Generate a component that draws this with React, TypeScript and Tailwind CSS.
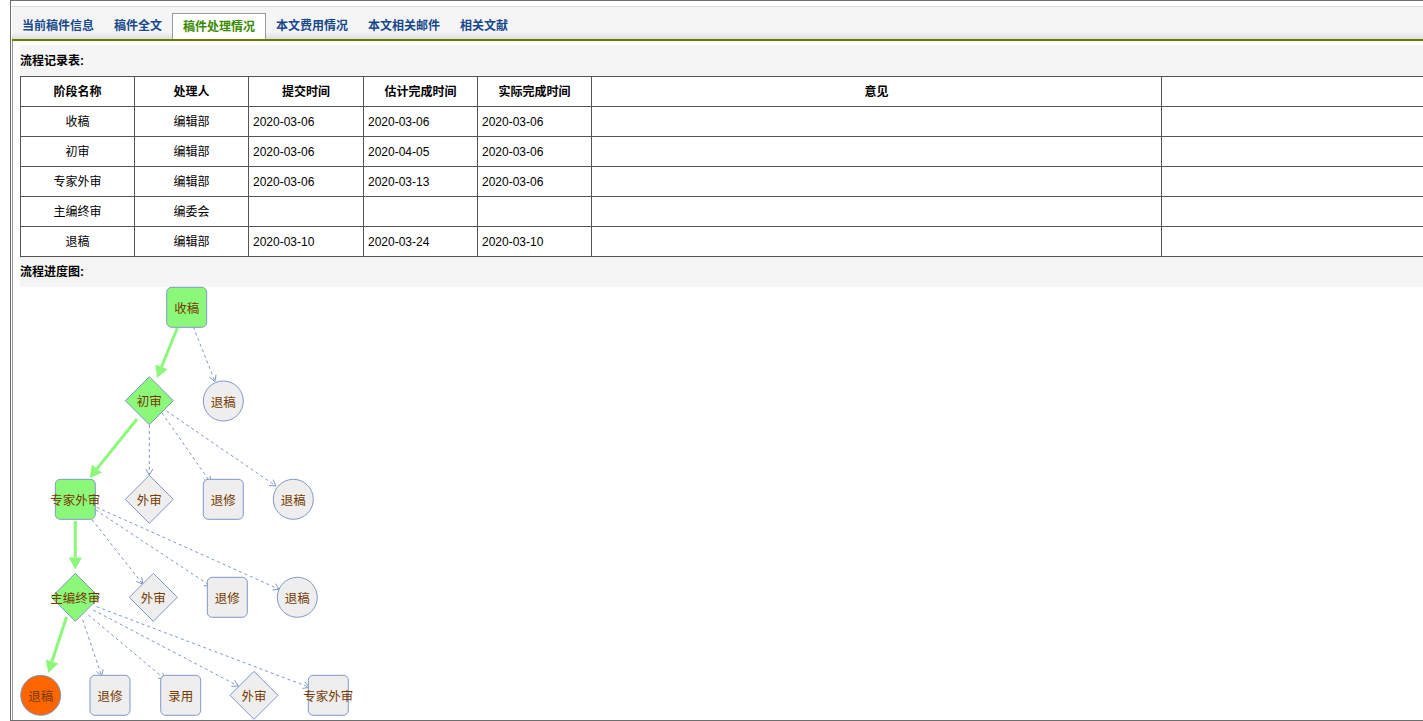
import React from 'react';

type P = [number, number];

interface FlowNode {
  kind: 'rect' | 'diamond' | 'circle';
  x: number;
  y: number;
  label: string;
  fill: string;
}

const GREEN = '#8cf87a';
const GRAY = '#eeeeee';
const ORANGE = '#ff6600';
const BLUE = '#7f98c9';
const TEXT = '#763a00';

const tabs = ['当前稿件信息', '稿件全文', '稿件处理情况', '本文费用情况', '本文相关邮件', '相关文献'];

const rows = [
  { stage: '收稿', who: '编辑部', submit: '2020-03-06', plan: '2020-03-06', done: '2020-03-06' },
  { stage: '初审', who: '编辑部', submit: '2020-03-06', plan: '2020-04-05', done: '2020-03-06' },
  { stage: '专家外审', who: '编辑部', submit: '2020-03-06', plan: '2020-03-13', done: '2020-03-06' },
  { stage: '主编终审', who: '编委会', submit: '', plan: '', done: '' },
  { stage: '退稿', who: '编辑部', submit: '2020-03-10', plan: '2020-03-24', done: '2020-03-10' },
];

const nodes: FlowNode[] = [
  { kind: 'rect', x: 186.7, y: 307.3, label: '收稿', fill: GREEN },
  { kind: 'diamond', x: 149.3, y: 400.7, label: '初审', fill: GREEN },
  { kind: 'circle', x: 223.3, y: 401, label: '退稿', fill: GRAY },
  { kind: 'rect', x: 75.3, y: 499.3, label: '专家外审', fill: GREEN },
  { kind: 'diamond', x: 149.3, y: 499.3, label: '外审', fill: GRAY },
  { kind: 'rect', x: 223.3, y: 499.3, label: '退修', fill: GRAY },
  { kind: 'circle', x: 293.3, y: 499.3, label: '退稿', fill: GRAY },
  { kind: 'diamond', x: 75.3, y: 597.3, label: '主编终审', fill: GREEN },
  { kind: 'diamond', x: 153.3, y: 597.3, label: '外审', fill: GRAY },
  { kind: 'rect', x: 227.3, y: 597.3, label: '退修', fill: GRAY },
  { kind: 'circle', x: 297.3, y: 597.3, label: '退稿', fill: GRAY },
  { kind: 'circle', x: 40.7, y: 695.3, label: '退稿', fill: ORANGE },
  { kind: 'rect', x: 110, y: 695.3, label: '退修', fill: GRAY },
  { kind: 'rect', x: 180.7, y: 695.3, label: '录用', fill: GRAY },
  { kind: 'diamond', x: 254, y: 695.3, label: '外审', fill: GRAY },
  { kind: 'rect', x: 328.3, y: 695.3, label: '专家外审', fill: GRAY },
];

const greenEdges: [P, P][] = [
  [[177.3, 328], [157, 378]],
  [[137, 419], [89.5, 478]],
  [[75.3, 521], [75.3, 569.5]],
  [[66.5, 617], [48.3, 673]],
];

const dashedEdges: [P, P][] = [
  [[193.3, 327], [215, 381.5]],
  [[149.3, 425], [149.3, 475]],
  [[162, 413], [210.7, 482.7]],
  [[166.5, 411], [276, 486]],
  [[88.3, 515], [142.7, 584]],
  [[95.7, 510], [210.7, 586]],
  [[96.7, 507.3], [279.3, 589.3]],
  [[82.7, 620], [101.7, 676]],
  [[88.3, 615], [165, 679.3]],
  [[93.3, 610], [238.3, 686]],
  [[96.7, 606.7], [309.3, 687.3]],
];

// points of an arrow head: left wing, tip, right wing
function head(from: P, to: P, len: number, half: number): P[] {
  const dx = to[0] - from[0];
  const dy = to[1] - from[1];
  const d = Math.hypot(dx, dy);
  const ux = dx / d;
  const uy = dy / d;
  const bx = to[0] - ux * len;
  const by = to[1] - uy * len;
  return [
    [bx - uy * half, by + ux * half],
    to,
    [bx + uy * half, by - ux * half],
  ];
}

const pts = (p: P[]) => p.map((q) => q.join(',')).join(' ');

function Shape({ n }: { n: FlowNode }) {
  let shape;
  if (n.kind === 'rect') {
    shape = <rect x={n.x - 20} y={n.y - 20} width={40} height={40} rx={5} fill={n.fill} stroke={BLUE} strokeWidth={1} />;
  } else if (n.kind === 'diamond') {
    shape = (
      <polygon
        points={pts([[n.x, n.y - 24], [n.x + 24, n.y], [n.x, n.y + 24], [n.x - 24, n.y]])}
        fill={n.fill}
        stroke={BLUE}
        strokeWidth={1}
      />
    );
  } else {
    shape = <circle cx={n.x} cy={n.y} r={20} fill={n.fill} stroke={BLUE} strokeWidth={1} />;
  }
  return (
    <g>
      {shape}
      <text x={n.x} y={n.y} textAnchor="middle" dominantBaseline="central" fontSize={12.5} fill={TEXT}>
        {n.label}
      </text>
    </g>
  );
}

function FlowChart() {
  return (
    <svg
      width={340}
      height={433}
      viewBox="20 287 340 433"
      className="block overflow-visible"
      style={{ fontFamily: '"Noto Sans CJK SC", "Liberation Sans", sans-serif' }}
    >
      {dashedEdges.map(([a, b], i) => (
        <g key={'d' + i} stroke={BLUE} strokeWidth={1} fill="none">
          <line x1={a[0]} y1={a[1]} x2={b[0]} y2={b[1]} strokeDasharray="3 3" />
          <polyline points={pts(head(a, b, 6, 3.5))} />
        </g>
      ))}
      {greenEdges.map(([a, b], i) => {
        const h = head(a, b, 12, 6.5);
        const base: P = [(h[0][0] + h[2][0]) / 2, (h[0][1] + h[2][1]) / 2];
        return (
          <g key={'g' + i}>
            <line x1={a[0]} y1={a[1]} x2={base[0]} y2={base[1]} stroke={GREEN} strokeWidth={3} />
            <polygon points={pts(h)} fill={GREEN} />
          </g>
        );
      })}
      {nodes.map((n, i) => (
        <Shape key={i} n={n} />
      ))}
    </svg>
  );
}

export default function App() {
  return (
    <div
      className="h-[721px] overflow-hidden bg-white pl-[10px] text-[12px] text-black"
      style={{ fontFamily: '"Liberation Sans", "Noto Sans CJK SC", sans-serif' }}
    >
      <div className="flex h-full flex-col border-t border-b border-l border-[#6e6e6e] pt-[5px]">
        {/* Tabs */}
        <div className="ml-px flex h-[35px] shrink-0 items-end border-t border-b-2 border-t-[#dadada] border-b-[#6b7c00] bg-[linear-gradient(to_bottom,#f5f5f5_78%,#dedede)]">
          {tabs.map((t, i) =>
            i === 2 ? (
              <div key={t} className="h-[26px] border border-b-0 border-[#9a9a9a] bg-white px-[10px] leading-[26px] font-bold text-[#3a8a00]">
                {t}
              </div>
            ) : (
              <div key={t} className="h-[26px] px-[10px] leading-[27px] font-bold text-[#17498c]">
                {t}
              </div>
            )
          )}
        </div>

        {/* Panel */}
        <div className="ml-px flex-1 border-l border-[#9a9a9a] pl-[7px] pt-[4px]">
          <div className="h-[31px] bg-[#f5f5f5] leading-[32px] font-bold">流程记录表:</div>
          <table className="w-[1711px] table-fixed border-collapse">
            <colgroup>
              <col className="w-[114px]" />
              <col className="w-[114px]" />
              <col className="w-[115px]" />
              <col className="w-[114px]" />
              <col className="w-[114px]" />
              <col className="w-[570px]" />
              <col className="w-[570px]" />
            </colgroup>
            <thead>
              <tr className="h-[30px]">
                {['阶段名称', '处理人', '提交时间', '估计完成时间', '实际完成时间', '意见', ''].map((h, i) => (
                  <th key={i} className="border border-[#555] p-0 pt-px text-center font-bold">
                    {h}
                  </th>
                ))}
              </tr>
            </thead>
            <tbody>
              {rows.map((r) => (
                <tr key={r.stage} className="h-[30px]">
                  <td className="border border-[#555] p-0 pt-px text-center">{r.stage}</td>
                  <td className="border border-[#555] p-0 pt-px text-center">{r.who}</td>
                  <td className="border border-[#555] py-0 pt-px pl-[4px]">{r.submit}</td>
                  <td className="border border-[#555] py-0 pt-px pl-[4px]">{r.plan}</td>
                  <td className="border border-[#555] py-0 pt-px pl-[4px]">{r.done}</td>
                  <td className="border border-[#555] p-0"></td>
                  <td className="border border-[#555] p-0"></td>
                </tr>
              ))}
            </tbody>
          </table>
          <div className="h-[30px] bg-[#f5f5f5] leading-[30px] font-bold">流程进度图:</div>
          <FlowChart />
        </div>
      </div>
    </div>
  );
}
